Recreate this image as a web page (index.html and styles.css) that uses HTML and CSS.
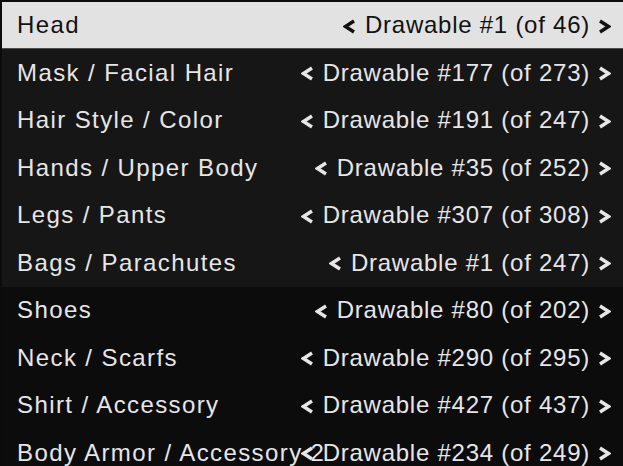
FILE: index.html
```html
<!DOCTYPE html>
<html lang="en">
<head>
    <meta charset="UTF-8">
    <title>Clothing Menu</title>
    <link rel="stylesheet" href="styles.css">
</head>
<body>
    <div class="menu">
        <div class="item selected">
            <span class="label">Head</span>
            <span class="value">
                <svg class="arrow" width="13" height="15" viewBox="0 0 13 15"><path d="M11 2 L2.5 7.5 L11 13"/></svg>
                <span class="text">Drawable #1 (of 46)</span>
                <svg class="arrow" width="13" height="15" viewBox="0 0 13 15"><path d="M2 2 L10.5 7.5 L2 13"/></svg>
            </span>
        </div>
        <div class="item">
            <span class="label">Mask / Facial Hair</span>
            <span class="value">
                <svg class="arrow" width="13" height="15" viewBox="0 0 13 15"><path d="M11 2 L2.5 7.5 L11 13"/></svg>
                <span class="text">Drawable #177 (of 273)</span>
                <svg class="arrow" width="13" height="15" viewBox="0 0 13 15"><path d="M2 2 L10.5 7.5 L2 13"/></svg>
            </span>
        </div>
        <div class="item">
            <span class="label">Hair Style / Color</span>
            <span class="value">
                <svg class="arrow" width="13" height="15" viewBox="0 0 13 15"><path d="M11 2 L2.5 7.5 L11 13"/></svg>
                <span class="text">Drawable #191 (of 247)</span>
                <svg class="arrow" width="13" height="15" viewBox="0 0 13 15"><path d="M2 2 L10.5 7.5 L2 13"/></svg>
            </span>
        </div>
        <div class="item">
            <span class="label">Hands / Upper Body</span>
            <span class="value">
                <svg class="arrow" width="13" height="15" viewBox="0 0 13 15"><path d="M11 2 L2.5 7.5 L11 13"/></svg>
                <span class="text">Drawable #35 (of 252)</span>
                <svg class="arrow" width="13" height="15" viewBox="0 0 13 15"><path d="M2 2 L10.5 7.5 L2 13"/></svg>
            </span>
        </div>
        <div class="item">
            <span class="label">Legs / Pants</span>
            <span class="value">
                <svg class="arrow" width="13" height="15" viewBox="0 0 13 15"><path d="M11 2 L2.5 7.5 L11 13"/></svg>
                <span class="text">Drawable #307 (of 308)</span>
                <svg class="arrow" width="13" height="15" viewBox="0 0 13 15"><path d="M2 2 L10.5 7.5 L2 13"/></svg>
            </span>
        </div>
        <div class="item">
            <span class="label">Bags / Parachutes</span>
            <span class="value">
                <svg class="arrow" width="13" height="15" viewBox="0 0 13 15"><path d="M11 2 L2.5 7.5 L11 13"/></svg>
                <span class="text">Drawable #1 (of 247)</span>
                <svg class="arrow" width="13" height="15" viewBox="0 0 13 15"><path d="M2 2 L10.5 7.5 L2 13"/></svg>
            </span>
        </div>
        <div class="item dark">
            <span class="label">Shoes</span>
            <span class="value">
                <svg class="arrow" width="13" height="15" viewBox="0 0 13 15"><path d="M11 2 L2.5 7.5 L11 13"/></svg>
                <span class="text">Drawable #80 (of 202)</span>
                <svg class="arrow" width="13" height="15" viewBox="0 0 13 15"><path d="M2 2 L10.5 7.5 L2 13"/></svg>
            </span>
        </div>
        <div class="item dark">
            <span class="label">Neck / Scarfs</span>
            <span class="value">
                <svg class="arrow" width="13" height="15" viewBox="0 0 13 15"><path d="M11 2 L2.5 7.5 L11 13"/></svg>
                <span class="text">Drawable #290 (of 295)</span>
                <svg class="arrow" width="13" height="15" viewBox="0 0 13 15"><path d="M2 2 L10.5 7.5 L2 13"/></svg>
            </span>
        </div>
        <div class="item dark">
            <span class="label">Shirt / Accessory</span>
            <span class="value">
                <svg class="arrow" width="13" height="15" viewBox="0 0 13 15"><path d="M11 2 L2.5 7.5 L11 13"/></svg>
                <span class="text">Drawable #427 (of 437)</span>
                <svg class="arrow" width="13" height="15" viewBox="0 0 13 15"><path d="M2 2 L10.5 7.5 L2 13"/></svg>
            </span>
        </div>
        <div class="item dark">
            <span class="label">Body Armor / Accessory 2</span>
            <span class="value">
                <svg class="arrow" width="13" height="15" viewBox="0 0 13 15"><path d="M11 2 L2.5 7.5 L11 13"/></svg>
                <span class="text">Drawable #234 (of 249)</span>
                <svg class="arrow" width="13" height="15" viewBox="0 0 13 15"><path d="M2 2 L10.5 7.5 L2 13"/></svg>
            </span>
        </div>
    </div>
</body>
</html>
```

FILE: styles.css
```css
body {
    margin: 0;
    padding: 0;
    background: #0b0b0b;
    font-family: "Liberation Sans", Arial, sans-serif;
    overflow: hidden;
}
.menu {
    padding: 2px 0 0 2px;
}
.item {
    display: grid;
    grid-template-areas: "cell";
    align-items: center;
    height: 47.5px;
    padding: 0 12px 0 15px;
    background: #161616;
    color: #e6e6e6;
    font-size: 24px;
    box-sizing: border-box;
}
.item.dark {
    background: #0c0c0c;
}
.item.selected {
    height: 47px;
    background: #e2e2e2;
    color: #111;
    border-bottom: 1px solid #4a4a4a;
}
.label {
    grid-area: cell;
    justify-self: start;
    white-space: nowrap;
    letter-spacing: 1.4px;
}
.value {
    grid-area: cell;
    justify-self: end;
    display: flex;
    align-items: center;
    white-space: nowrap;
}
.text {
    margin: 0 8px 0 9px;
    letter-spacing: 0.75px;
}
.arrow {
    display: block;
    flex: none;
    width: 13px;
    height: 15px;
    margin-top: 2px;
    fill: none;
    stroke: currentColor;
    stroke-width: 3.4px;
}
```
